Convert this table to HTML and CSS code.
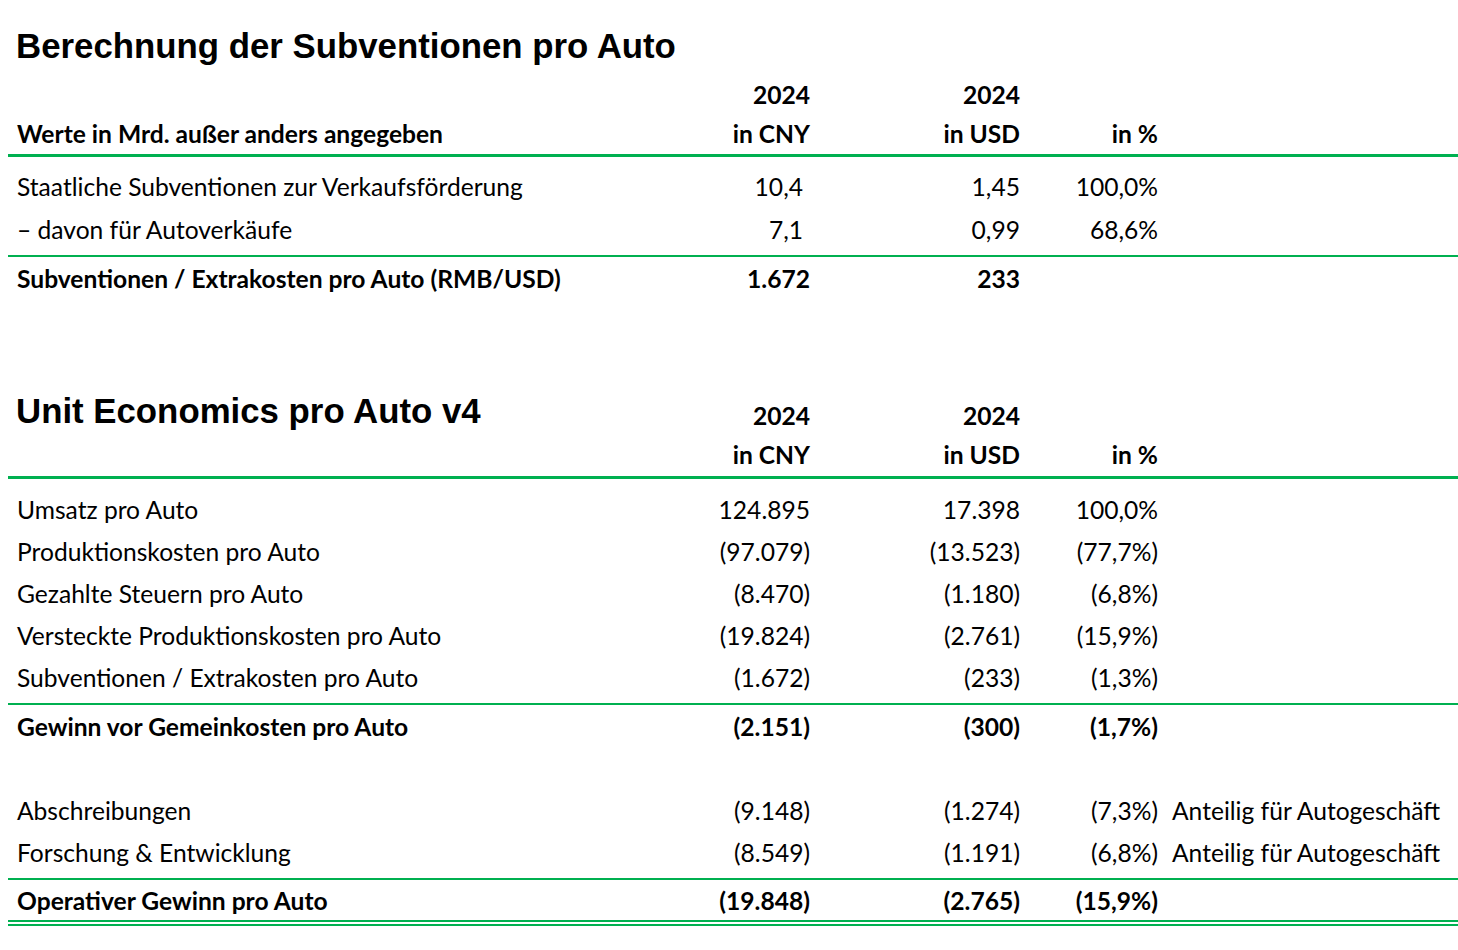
FILE: index.html
```html
<!DOCTYPE html>
<html lang="de">
<head>
<meta charset="utf-8">
<title>Subventionen pro Auto</title>
<link rel="stylesheet" href="styles.css">
</head>
<body>
<div class="page">
  <section class="tbl t1">
    <h1 class="title">Berechnung der Subventionen pro Auto</h1>
    <div class="row head bold"><span></span><span class="num">2024</span><span class="num">2024</span><span></span><span></span></div>
    <div class="row head bold head-last"><span class="lbl">Werte in Mrd. außer anders angegeben</span><span class="num">in CNY</span><span class="num">in USD</span><span class="num">in %</span><span></span></div>
    <div class="body thick">
      <div class="row r43"><span class="lbl">Staatliche Subventionen zur Verkaufsförderung</span><span class="num pad">10,4</span><span class="num">1,45</span><span class="num">100,0%</span><span></span></div>
      <div class="row r43"><span class="lbl">– davon für Autoverkäufe</span><span class="num pad">7,1</span><span class="num">0,99</span><span class="num">68,6%</span><span></span></div>
    </div>
    <div class="row r43 bold thin"><span class="lbl">Subventionen / Extrakosten pro Auto (RMB/USD)</span><span class="num">1.672</span><span class="num">233</span><span></span><span></span></div>
  </section>

  <section class="tbl t2">
    <div class="row head title-row bold"><h2 class="title">Unit Economics pro Auto v4</h2><span class="num">2024</span><span class="num">2024</span><span></span><span></span></div>
    <div class="row head bold head-last2"><span></span><span class="num">in CNY</span><span class="num">in USD</span><span class="num">in %</span><span></span></div>
    <div class="body thick body2">
      <div class="row"><span class="lbl">Umsatz pro Auto</span><span class="num">124.895</span><span class="num">17.398</span><span class="num">100,0%</span><span></span></div>
      <div class="row"><span class="lbl">Produktionskosten pro Auto</span><span class="num">(97.079)</span><span class="num">(13.523)</span><span class="num">(77,7%)</span><span></span></div>
      <div class="row"><span class="lbl">Gezahlte Steuern pro Auto</span><span class="num">(8.470)</span><span class="num">(1.180)</span><span class="num">(6,8%)</span><span></span></div>
      <div class="row"><span class="lbl">Versteckte Produktionskosten pro Auto</span><span class="num">(19.824)</span><span class="num">(2.761)</span><span class="num">(15,9%)</span><span></span></div>
      <div class="row"><span class="lbl">Subventionen / Extrakosten pro Auto</span><span class="num">(1.672)</span><span class="num">(233)</span><span class="num">(1,3%)</span><span></span></div>
    </div>
    <div class="body thin body3">
      <div class="row bold"><span class="lbl">Gewinn vor Gemeinkosten pro Auto</span><span class="num">(2.151)</span><span class="num">(300)</span><span class="num">(1,7%)</span><span></span></div>
      <div class="row"><span></span><span></span><span></span><span></span><span></span></div>
      <div class="row"><span class="lbl">Abschreibungen</span><span class="num">(9.148)</span><span class="num">(1.274)</span><span class="num">(7,3%)</span><span class="note">Anteilig für Autogeschäft</span></div>
      <div class="row"><span class="lbl">Forschung &amp; Entwicklung</span><span class="num">(8.549)</span><span class="num">(1.191)</span><span class="num">(6,8%)</span><span class="note">Anteilig für Autogeschäft</span></div>
    </div>
    <div class="row bold thin final"><span class="lbl">Operativer Gewinn pro Auto</span><span class="num">(19.848)</span><span class="num">(2.765)</span><span class="num">(15,9%)</span><span></span></div>
  </section>
</div>
</body>
</html>
```

FILE: styles.css
```css
html, body {
  margin: 0;
  padding: 0;
  background: #ffffff;
  color: #000000;
}

body {
  font-family: Lato, "Open Sans", "DejaVu Sans", sans-serif;
  font-size: 24.6px;
}

.page {
  padding-left: 8px;
  width: 1450px;
}

.title {
  font-family: "Liberation Sans", Arial, Helvetica, sans-serif;
  font-weight: 700;
  font-size: 34.8px;
  margin: 0;
  line-height: 40px;
  white-space: nowrap;
}

.t1 > .title {
  padding: 26px 0 9px 8px;
}

.row {
  display: grid;
  grid-template-columns: 640px 162px 210px 138px 1fr;
  align-items: center;
  height: 42px;
  white-space: nowrap;
  line-height: 1;
}

.row > span {
  padding-top: 2px;
}

.r43 {
  height: 43px;
}

.head {
  height: 39px;
}

.head-last {
  margin-bottom: 1px;
}

.bold {
  font-weight: 700;
}

.lbl {
  padding-left: 9px;
}

.num {
  text-align: right;
}

.num.pad {
  padding-right: 7px;
}

.note {
  padding-left: 14px;
}

.thick {
  border-top: 3px solid #00b050;
}

.thin {
  border-top: 2px solid #00b050;
}

.t1 .body {
  padding: 8px 0 4px;
}

.t2 {
  margin-top: 91px;
}

.title-row {
  height: 44px;
  align-items: end;
}

.title-row > span {
  padding-top: 0;
  padding-bottom: 8px;
}

.title-row .title {
  padding: 0 0 5.5px 8px;
}

.head-last2 {
  margin-bottom: 2px;
}

.body2 {
  padding: 9px 0 5px;
}

.body3 {
  padding: 0 0 5px;
}

.final {
  height: 40px;
  border-bottom: 6px double #00b050;
}
```
